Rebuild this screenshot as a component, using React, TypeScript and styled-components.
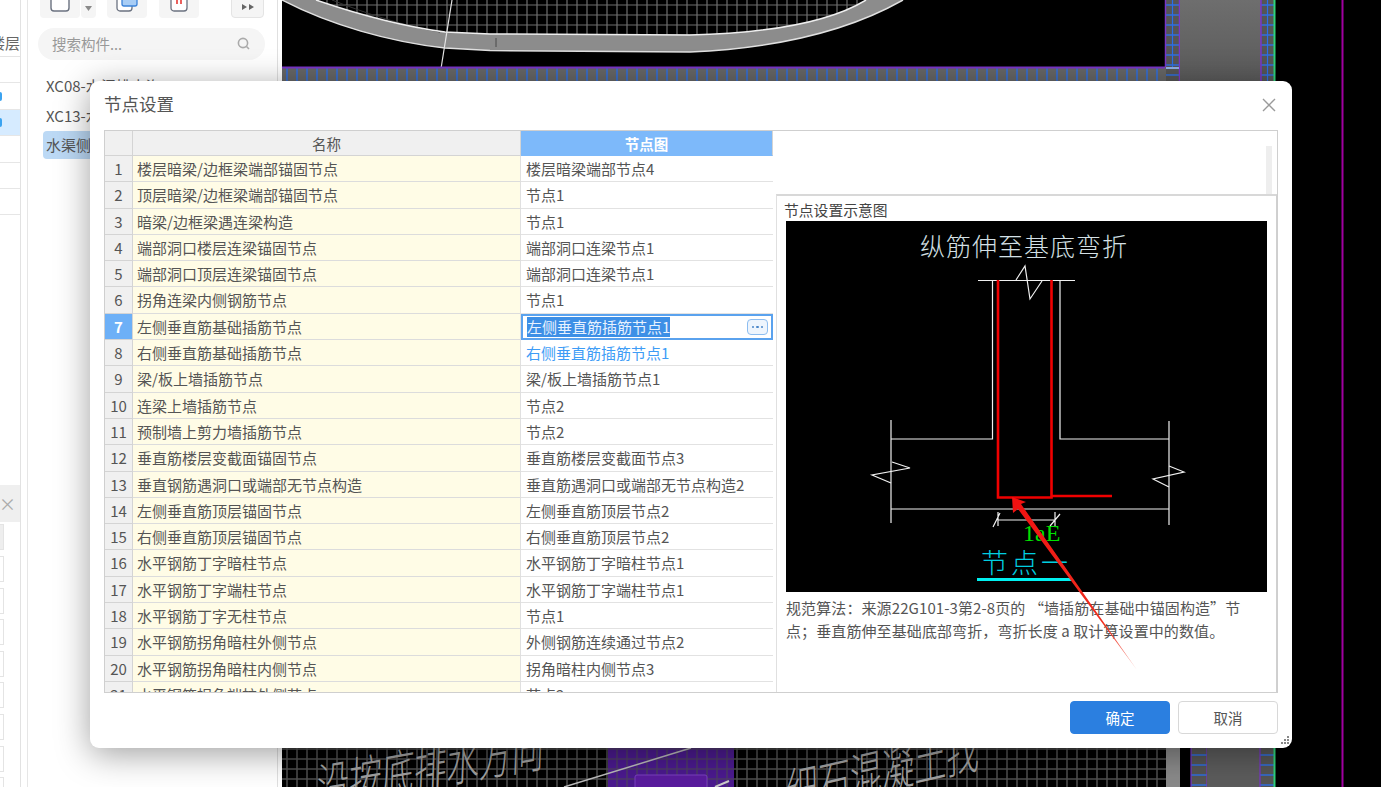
import React from "react";
import styled, { createGlobalStyle } from "styled-components";

const Global = createGlobalStyle`
  html, body { margin: 0; padding: 0; background: #fff; }
  * { box-sizing: border-box; }
  body { font-family: "Noto Sans CJK SC", "Noto Sans", sans-serif; font-size: 15px; color: #555; }
`;

const Page = styled.div`
  position: relative;
  width: 1381px;
  height: 787px;
  overflow: hidden;
  display: flex;
  background: #fff;
`;

/* left rail */
const Rail = styled.div`
  width: 21px;
  flex: none;
  border-right: 1px solid #e2e2e2;
  display: flex;
  flex-direction: column;
  overflow: hidden;
`;
const RailLabel = styled.div`
  height: 57px;
  flex: none;
  padding-top: 31px;
  border-bottom: 1px solid #e4e4e4;
  font-size: 15px;
  line-height: 24px;
  white-space: nowrap;
  direction: rtl;
  color: #666;
`;
const RailRow = styled.div<{ $on?: boolean }>`
  height: 26.4px;
  flex: none;
  border-bottom: 1px solid #e6e6e6;
  background: ${(p) => (p.$on ? "#d6ebff" : "#fff")};
  display: flex;
  align-items: center;
`;
const RailDot = styled.span`
  width: 2px;
  height: 9px;
  background: #3ba3f0;
  border-radius: 0 2px 2px 0;
`;
const RailGap = styled.div`
  height: 270px;
  flex: none;
`;
const RailHead = styled.div`
  height: 37px;
  flex: none;
  background: #efefef;
  color: #aaa;
  font-size: 17px;
  line-height: 37px;
  margin-bottom: 2px;
  text-indent: -1px;
`;
const RailItem = styled.div<{ $on?: boolean }>`
  width: 4px;
  height: 26px;
  flex: none;
  margin-bottom: 5.6px;
  border: 1px solid #e4e4e4;
  border-left: none;
  background: ${(p) => (p.$on ? "#eee" : "#fff")};
`;

/* component panel */
const Panel = styled.div`
  width: 251px;
  flex: none;
  margin-left: 6px;
  border-left: 1px solid #e6e6e6;
  border-right: 1px solid #e0e0e0;
  display: flex;
  flex-direction: column;
`;
const Toolbar = styled.div`
  height: 18px;
  display: flex;
  align-items: flex-end;
  padding-left: 12px;
`;
const ToolButton = styled.div<{ $w: number; $gap: number; $border?: boolean }>`
  width: ${(p) => p.$w}px;
  height: 34px;
  flex: none;
  margin-left: ${(p) => p.$gap}px;
  background: #f5f5f5;
  border-radius: 4px;
  border: ${(p) => (p.$border ? "1px solid #e4e4e4" : "none")};
  display: flex;
  align-items: flex-end;
  justify-content: center;
  padding-bottom: 6px;
`;
const SearchBox = styled.div`
  margin: 10px 12px 0 10px;
  height: 32px;
  border-radius: 16px;
  background: #f5f5f5;
  display: flex;
  align-items: center;
  justify-content: space-between;
  padding: 0 15px 2px 14px;
  color: #999;
  font-size: 14.5px;
`;
const List = styled.div`
  margin: 12px 12px 0 15px;
  display: flex;
  flex-direction: column;
  gap: 2px;
`;
const ListItem = styled.div<{ $on?: boolean }>`
  height: 27.5px;
  line-height: 27.5px;
  padding-left: 3px;
  border-radius: 4px;
  white-space: nowrap;
  overflow: hidden;
  color: #555;
  font-size: 15px;
  background: ${(p) => (p.$on ? "#bcd9f5" : "transparent")};
`;

/* CAD canvas */
const Canvas = styled.div`
  flex: 1;
  margin-left: 4px;
  background: #000;
  display: flex;
`;
const CanvasArt = styled.svg`
  display: block;
  width: 1099px;
  height: 787px;
`;

/* dialog */
const Dialog = styled.div`
  position: absolute;
  left: 90px;
  top: 81px;
  width: 1202px;
  height: 667px;
  background: #fff;
  border-radius: 9px;
  box-shadow: 0 6px 34px rgba(0, 0, 0, 0.38);
  display: flex;
  flex-direction: column;
  padding: 0 14px;
`;
const TitleBar = styled.div`
  height: 49px;
  flex: none;
  display: flex;
  align-items: center;
  justify-content: space-between;
  font-size: 17.5px;
  color: #555;
  padding-bottom: 1px;
`;
const TitleText = styled.span`
  line-height: 20px;
  margin-bottom: 2px;
`;
const CloseIcon = styled.svg`
  width: 16px;
  height: 16px;
  margin-right: 1px;
`;
const Frame = styled.div`
  height: 563px;
  flex: none;
  border: 1px solid #cfcfcf;
  display: flex;
  overflow: hidden;
`;
const Table = styled.div`
  width: 668px;
  flex: none;
  display: grid;
  grid-template-columns: 28px 388px 252px;
  grid-template-rows: 25px;
  grid-auto-rows: 26.3px;
  overflow: hidden;
  align-content: start;
`;
const HeadCell = styled.div<{ $active?: boolean }>`
  background: ${(p) => (p.$active ? "#7db9fa" : "#f0f0f0")};
  color: ${(p) => (p.$active ? "#fff" : "#555")};
  font-weight: ${(p) => (p.$active ? 700 : 400)};
  border-right: 1px solid #d4d4d4;
  border-bottom: 1px solid ${(p) => (p.$active ? "#7db9fa" : "#d4d4d4")};
  text-align: center;
  line-height: 25px;
  font-size: 14.5px;
`;
const IndexCell = styled.div<{ $active?: boolean }>`
  background: ${(p) => (p.$active ? "#6db0f7" : "#f0f0f0")};
  color: ${(p) => (p.$active ? "#fff" : "#555")};
  font-weight: ${(p) => (p.$active ? 700 : 400)};
  border-right: 1px solid #d4d4d4;
  border-bottom: 1px solid #d4d4d4;
  text-align: center;
  line-height: 25px;
  font-size: 15px;
`;
const NameCell = styled.div`
  background: #fffce6;
  border-right: 1px solid #e0e0e0;
  border-bottom: 1px solid #dcdcdc;
  padding-left: 4px;
  line-height: 25px;
  white-space: nowrap;
  color: #555;
`;
const ValueCell = styled.div<{ $link?: boolean }>`
  background: #fff;
  border-bottom: 1px solid #e2e2e2;
  padding-left: 5px;
  line-height: 25px;
  white-space: nowrap;
  color: ${(p) => (p.$link ? "#3d9cf6" : "#555")};
`;
const EditCell = styled.div`
  background: #fff;
  border: 2px solid #5aa2ee;
  display: flex;
  align-items: center;
  justify-content: space-between;
  padding: 0 3px 0 4px;
`;
const Selected = styled.span`
  background: #3d8fe6;
  color: #e8f2ff;
  line-height: 20px;
  height: 20px;
  display: block;
  white-space: nowrap;
`;
const MoreButton = styled.div`
  width: 21px;
  height: 16px;
  border: 1px solid #8dbdf0;
  border-radius: 4px;
  background: #eef5fd;
  display: flex;
  align-items: center;
  justify-content: center;
  gap: 2px;
`;
const MoreDot = styled.span`
  width: 2.5px;
  height: 2.5px;
  background: #4a86c8;
  border-radius: 50%;
`;
const SidePane = styled.div`
  flex: 1;
  display: flex;
  flex-direction: column;
  padding: 15px 0 0 3px;
  min-width: 0;
`;
const ScrollStub = styled.div`
  width: 6px;
  height: 48px;
  flex: none;
  margin-left: auto;
  margin-right: 5px;
  background: #eeeeee;
`;
const DiagramPanel = styled.div`
  flex: 1;
  border-top: 2px solid #d8d8d8;
  border-left: 1px solid #e0e0e0;
  border-right: 1px solid #d0d0d0;
  padding: 0 9px 0 9px;
  display: flex;
  flex-direction: column;
  min-height: 0;
`;
const DiagramTitle = styled.div`
  height: 25px;
  flex: none;
  font-size: 14.8px;
  line-height: 27px;
  margin-left: -2px;
  color: #444;
  white-space: nowrap;
`;
const DiagramArt = styled.svg`
  display: block;
  width: 481px;
  height: 371px;
  flex: none;
  background: #000;
`;
const Description = styled.div`
  margin-top: 4px;
  font-size: 15px;
  letter-spacing: 0.1px;
  line-height: 23px;
  color: #555;
  width: 472px;
`;
const Footer = styled.div`
  flex: 1;
  display: flex;
  justify-content: flex-end;
  gap: 8px;
  padding-top: 8px;
  padding-bottom: 14px;
`;
const Button = styled.div<{ $primary?: boolean }>`
  width: 100px;
  height: 33px;
  border-radius: 4px;
  text-align: center;
  line-height: 31px;
  font-size: 14.5px;
  background: ${(p) => (p.$primary ? "#2b7fe0" : "#fff")};
  color: ${(p) => (p.$primary ? "#fff" : "#555")};
  border: 1px solid ${(p) => (p.$primary ? "#2b7fe0" : "#d8d8d8")};
`;
const Grip = styled.svg`
  position: absolute;
  right: 2px;
  bottom: 2px;
  width: 11px;
  height: 11px;
`;
const ArrowOverlay = styled.svg`
  position: absolute;
  left: 0;
  top: 0;
  width: 1381px;
  height: 787px;
  pointer-events: none;
`;

const rows: [string, string][] = [
  ["楼层暗梁/边框梁端部锚固节点", "楼层暗梁端部节点4"],
  ["顶层暗梁/边框梁端部锚固节点", "节点1"],
  ["暗梁/边框梁遇连梁构造", "节点1"],
  ["端部洞口楼层连梁锚固节点", "端部洞口连梁节点1"],
  ["端部洞口顶层连梁锚固节点", "端部洞口连梁节点1"],
  ["拐角连梁内侧钢筋节点", "节点1"],
  ["左侧垂直筋基础插筋节点", "左侧垂直筋插筋节点1"],
  ["右侧垂直筋基础插筋节点", "右侧垂直筋插筋节点1"],
  ["梁/板上墙插筋节点", "梁/板上墙插筋节点1"],
  ["连梁上墙插筋节点", "节点2"],
  ["预制墙上剪力墙插筋节点", "节点2"],
  ["垂直筋楼层变截面锚固节点", "垂直筋楼层变截面节点3"],
  ["垂直钢筋遇洞口或端部无节点构造", "垂直筋遇洞口或端部无节点构造2"],
  ["左侧垂直筋顶层锚固节点", "左侧垂直筋顶层节点2"],
  ["右侧垂直筋顶层锚固节点", "右侧垂直筋顶层节点2"],
  ["水平钢筋丁字暗柱节点", "水平钢筋丁字暗柱节点1"],
  ["水平钢筋丁字端柱节点", "水平钢筋丁字端柱节点1"],
  ["水平钢筋丁字无柱节点", "节点1"],
  ["水平钢筋拐角暗柱外侧节点", "外侧钢筋连续通过节点2"],
  ["水平钢筋拐角暗柱内侧节点", "拐角暗柱内侧节点3"],
  ["水平钢筋拐角端柱外侧节点", "节点2"],
];

const OUTER = "M282 0C330 25 390 42 445 48L490 50.5L690 52C780 48 850 30 903 0";
const INNER = "M316 0C360 15 400 26 445 32L490 34L690 35C770 33 830 22 866 0";

function CadDrawing() {
  return (
    <CanvasArt viewBox="282 0 1099 787">
      <defs>
        <pattern id="g1" x="282" y="0" width="10" height="10" patternUnits="userSpaceOnUse">
          <path d="M5 0V10M0 5H10" stroke="#6e6e6e" strokeWidth="1.2" fill="none" />
        </pattern>
        <pattern id="g2" x="282" y="754" width="10" height="10" patternUnits="userSpaceOnUse">
          <path d="M5 0V10M0 5H10" stroke="#505050" strokeWidth="1.5" fill="none" />
        </pattern>
        <pattern id="b1" x="282" y="68" width="10" height="13" patternUnits="userSpaceOnUse">
          <path d="M5 0V13" stroke="#2a6fe8" strokeWidth="1.4" fill="none" />
        </pattern>
        <pattern id="b2" x="0" y="0" width="13" height="10" patternUnits="userSpaceOnUse">
          <path d="M0 5H13" stroke="#2a6fe8" strokeWidth="1.4" fill="none" />
        </pattern>
        <linearGradient id="gray" x1="0" y1="0" x2="0" y2="1">
          <stop offset="0" stopColor="#6e6e6e" />
          <stop offset="1" stopColor="#5a5a5a" />
        </linearGradient>
      </defs>

      {/* top arc region */}
      <path d={`${INNER}Z`} fill="url(#g1)" />
      <path d={`${OUTER}H866C830 22 770 33 690 35L490 34L445 32C400 26 360 15 316 0Z`} fill="#8c8c8c" />
      <path d={OUTER} stroke="#e0e0e0" strokeWidth="1.5" fill="none" />
      <path d="M332 0C370 15 405 26 440 32" stroke="#333" strokeWidth="1" fill="none" />
      <path d={INNER} stroke="#eee" strokeWidth="1.5" fill="none" />
      <path d="M496 38V47" stroke="#555" strokeWidth="1.2" />
      <path d="M452 0L439 81" stroke="#e4e4e4" strokeWidth="1.2" />

      {/* horizontal wall */}
      <rect x="282" y="67" width="897" height="14" fill="#666" />
      <rect x="282" y="68" width="897" height="13" fill="url(#b1)" />
      <path d="M282 67.5H1165" stroke="#7a35c8" strokeWidth="2" />

      {/* vertical walls */}
      <rect x="1166" y="0" width="13" height="81" fill="#555" />
      <rect x="1166" y="0" width="13" height="81" fill="url(#b2)" />
      <path d="M1172.5 0V67" stroke="#2a6fe8" strokeWidth="1.2" />
      <path d="M1165.5 0V67" stroke="#7a35c8" strokeWidth="1.5" />
      <path d="M1179.5 0V81" stroke="#7a35c8" strokeWidth="1.5" />
      <rect x="1180" y="0" width="81" height="81" fill="url(#gray)" />
      <rect x="1261" y="0" width="13" height="81" fill="#555" />
      <rect x="1261" y="0" width="13" height="81" fill="url(#b2)" />
      <path d="M1267.5 0V81" stroke="#2a6fe8" strokeWidth="1.2" />
      <path d="M1261 0V81" stroke="#7a35c8" strokeWidth="1.5" />
      <path d="M1274.5 0V81" stroke="#2fd27a" strokeWidth="2" />
      <rect x="1166" y="67" width="13" height="2" fill="#8fb0e8" />
      <path d="M1342.5 0V787" stroke="#a000a0" strokeWidth="2" />

      {/* bottom region */}
      <rect x="282" y="748" width="884" height="39" fill="url(#g2)" />
      <rect x="608" y="748" width="126" height="39" fill="#4b1a8f" />
      <rect x="608" y="748" width="126" height="39" fill="url(#g2)" opacity="0.6" />
      <rect x="635" y="775" width="72" height="14" rx="2" fill="#5a1c9e" stroke="#7a3fc0" />
      <path d="M564 787L691 748" stroke="#bbb" strokeWidth="1.5" />
      <path d="M715 787L729 781" stroke="#ccc" strokeWidth="2" />
      <rect x="1166" y="748" width="14" height="39" fill="#8a8a8a" />
      <rect x="1191" y="748" width="16" height="39" fill="#555" />
      <rect x="1191" y="748" width="16" height="39" fill="url(#b2)" />
      <path d="M1191 748V787M1207 748V787" stroke="#7a35c8" strokeWidth="1.2" />
      <rect x="1207" y="748" width="53" height="39" fill="#5c5c5c" />
      <rect x="1260" y="748" width="14" height="39" fill="#555" />
      <rect x="1260" y="748" width="14" height="39" fill="url(#b2)" />
      <path d="M1260 748V787" stroke="#7a35c8" strokeWidth="1.2" />
      <path d="M1274.5 748V787" stroke="#2fd27a" strokeWidth="2" />
      <g fill="#a0a0a0" fontFamily="'Noto Sans CJK SC', sans-serif" fontSize="33" fontWeight="300">
        <text transform="translate(316 806) rotate(-10) skewX(-12) scale(1 1.5)">沿按底排水方向</text>
        <text transform="translate(786 812) rotate(-13) skewX(-12) scale(1 1.5)">细石混凝土找</text>
      </g>
    </CanvasArt>
  );
}

function NodeDiagram() {
  return (
    <DiagramArt viewBox="786 221 481 371">
      <text x="1024" y="256" textAnchor="middle" fill="#d4e0e6" fontSize="25" letterSpacing="1" fontFamily="'Noto Sans CJK SC', sans-serif" fontWeight="300">
        纵筋伸至基底弯折
      </text>
      <g stroke="#f0f0f0" strokeWidth="1.2" fill="none">
        <path d="M978 280.5H1075" />
        <path d="M1016 280L1025 266L1030 299L1042 281" />
        <path d="M992.5 280V439H891" />
        <path d="M891 420V523" />
        <path d="M1060 280V439H1169" />
        <path d="M1169 421V525" />
        <path d="M891 509H1169" />
        <path d="M892 462L910 468L872 475L891 483" />
        <path d="M1169 466L1184 472L1153 479L1169 487" />
      </g>
      <g stroke="#f00000" strokeWidth="2.6" fill="none">
        <path d="M998 280V497.5H1051.5V280" />
        <path d="M1051.5 496H1112" />
      </g>
      <text x="1023" y="541" fill="#00e000" fontSize="24" fontFamily="'Liberation Serif', serif">
        1aE
      </text>
      <path d="M998 520H1055M993 527L1000 513M998 512V526M1050 526L1060 514M1055 512V526" stroke="#f0f0f0" strokeWidth="1.2" fill="none" />
      <text x="981" y="573" fill="#00cfe0" fontSize="27" letterSpacing="3" fontFamily="'Noto Sans CJK SC', sans-serif" fontWeight="300">
        节点一
      </text>
      <rect x="977" y="578" width="95" height="3" fill="#00f0f0" />
    </DiagramArt>
  );
}

export default function App() {
  return (
    <>
      <Global />
      <Page>
        <Rail>
          <RailLabel>楼层</RailLabel>
          <RailRow />
          <RailRow>
            <RailDot />
          </RailRow>
          <RailRow $on>
            <RailDot />
          </RailRow>
          <RailRow />
          <RailRow />
          <RailRow />
          <RailGap />
          <RailHead>×</RailHead>
          <RailItem $on />
          {Array.from({ length: 8 }).map((_, i) => (
            <RailItem key={i} />
          ))}
        </Rail>
        <Panel>
          <Toolbar>
            <ToolButton $w={40} $gap={0}>
              <svg width="20" height="22" viewBox="0 0 20 22">
                <rect x="1" y="1" width="18" height="20" rx="3" fill="#fff" stroke="#6b7280" strokeWidth="1.4" />
              </svg>
            </ToolButton>
            <ToolButton $w={15} $gap={1}>
              <svg width="9" height="6" viewBox="0 0 9 6">
                <path d="M1 0H8L4.5 5Z" fill="#8a8a8a" />
              </svg>
            </ToolButton>
            <ToolButton $w={40} $gap={11}>
              <svg width="22" height="22" viewBox="0 0 22 22">
                <rect x="1" y="5" width="15" height="16" rx="3" fill="#fff" stroke="#6b7280" strokeWidth="1.3" />
                <rect x="6" y="0" width="15" height="16" rx="2" fill="#a8cdf5" stroke="#3b82d8" strokeWidth="1.3" />
              </svg>
            </ToolButton>
            <ToolButton $w={40} $gap={12}>
              <svg width="18" height="22" viewBox="0 0 18 22">
                <rect x="1" y="1" width="16" height="20" rx="3" fill="#fff" stroke="#6b7280" strokeWidth="1.3" />
                <path d="M7 4V14M11 4V14" stroke="#e53935" strokeWidth="1.6" />
              </svg>
            </ToolButton>
            <ToolButton $w={33} $gap={32} $border>
              <svg width="14" height="8" viewBox="0 0 14 8">
                <path d="M1 1L6 4L1 7ZM8 1L13 4L8 7Z" fill="#666" />
              </svg>
            </ToolButton>
          </Toolbar>
          <SearchBox>
            <span>搜索构件...</span>
            <svg width="13" height="13" viewBox="0 0 13 13" fill="none" stroke="#aaa" strokeWidth="1.6">
              <circle cx="6" cy="6" r="4.6" />
              <path d="M9.5 9.5L12 12" />
            </svg>
          </SearchBox>
          <List>
            <ListItem>XC08-水渠排水沟</ListItem>
            <ListItem>XC13-水渠排水沟</ListItem>
            <ListItem $on>水渠侧壁</ListItem>
          </List>
        </Panel>
        <Canvas>
          <CadDrawing />
        </Canvas>

        <Dialog>
          <TitleBar>
            <TitleText>节点设置</TitleText>
            <CloseIcon viewBox="0 0 16 16" fill="none" stroke="#9a9a9a" strokeWidth="1.4">
              <path d="M2 2L14 14M14 2L2 14" />
            </CloseIcon>
          </TitleBar>
          <Frame>
            <Table>
              <HeadCell />
              <HeadCell>名称</HeadCell>
              <HeadCell $active>节点图</HeadCell>
              {rows.map(([name, value], i) => (
                <React.Fragment key={i}>
                  <IndexCell $active={i === 6}>{i + 1}</IndexCell>
                  <NameCell>{name}</NameCell>
                  {i === 6 ? (
                    <EditCell>
                      <Selected>{value}</Selected>
                      <MoreButton>
                        <MoreDot />
                        <MoreDot />
                        <MoreDot />
                      </MoreButton>
                    </EditCell>
                  ) : (
                    <ValueCell $link={i === 7}>{value}</ValueCell>
                  )}
                </React.Fragment>
              ))}
            </Table>
            <SidePane>
              <ScrollStub />
              <DiagramPanel>
                <DiagramTitle>节点设置示意图</DiagramTitle>
                <NodeDiagram />
                <Description>
                  规范算法：来源22G101-3第2-8页的 “墙插筋在基础中锚固构造”节点；垂直筋伸至基础底部弯折，弯折长度 a 取计算设置中的数值。
                </Description>
              </DiagramPanel>
            </SidePane>
          </Frame>
          <Footer>
            <Button $primary>确定</Button>
            <Button>取消</Button>
          </Footer>
          <Grip viewBox="0 0 11 11" fill="#888">
            <rect x="8" y="1" width="2" height="2" />
            <rect x="5" y="4" width="2" height="2" />
            <rect x="8" y="4" width="2" height="2" />
            <rect x="2" y="7" width="2" height="2" />
            <rect x="5" y="7" width="2" height="2" />
            <rect x="8" y="7" width="2" height="2" />
          </Grip>
        </Dialog>

        <ArrowOverlay viewBox="0 0 1381 787">
          <defs>
            <linearGradient id="fade" x1="1012" y1="497" x2="1137" y2="670" gradientUnits="userSpaceOnUse">
              <stop offset="0" stopColor="#f01010" />
              <stop offset="0.75" stopColor="#f03020" />
              <stop offset="1" stopColor="#f8b0a8" />
            </linearGradient>
          </defs>
          <polygon points="1012,497 1026,502 1021,504 1137,670 1018,509 1013,513" fill="url(#fade)" />
        </ArrowOverlay>
      </Page>
    </>
  );
}
